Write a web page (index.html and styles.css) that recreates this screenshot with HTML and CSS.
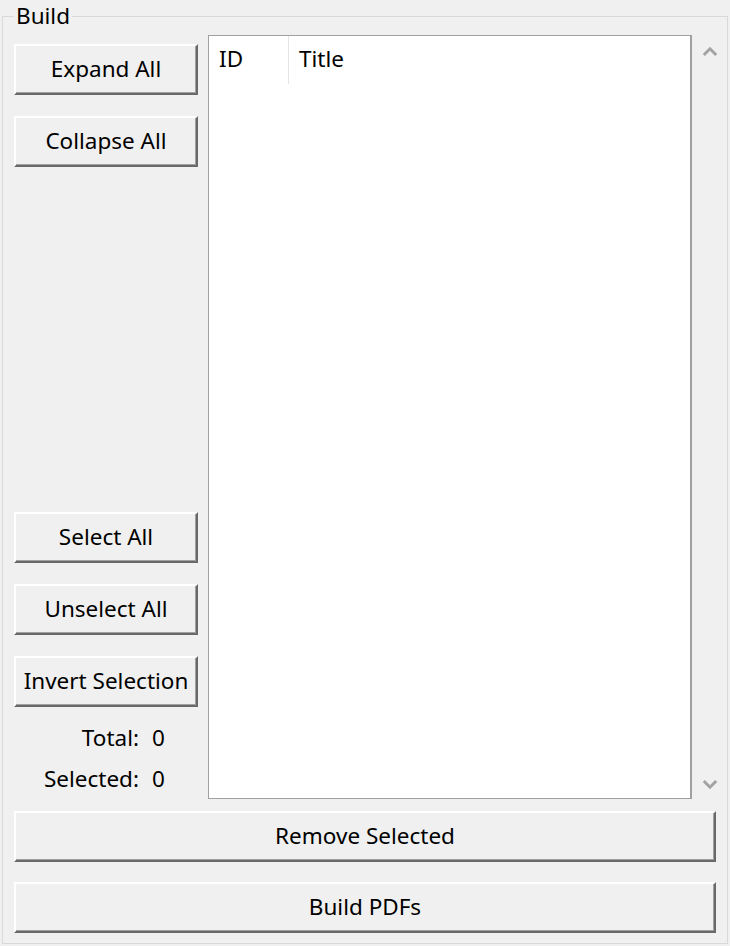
FILE: index.html
```html
<!DOCTYPE html>
<html lang="en">
<head>
<meta charset="utf-8">
<title>Build</title>
<link rel="stylesheet" href="styles.css">
</head>
<body>
<fieldset class="group">
  <legend class="group-title">Build</legend>
  <div class="layout">
    <div class="side">
      <div class="btn-stack">
        <button class="btn">Expand All</button>
        <button class="btn">Collapse All</button>
      </div>
      <div class="btn-stack">
        <button class="btn">Select All</button>
        <button class="btn">Unselect All</button>
        <button class="btn">Invert Selection</button>
        <div class="stats">
          <span class="stat-label">Total:</span><span class="stat-value">0</span>
          <span class="stat-label">Selected:</span><span class="stat-value">0</span>
        </div>
      </div>
    </div>
    <div class="list">
      <div class="list-header">
        <div class="col col-id">ID</div>
        <div class="col col-title">Title</div>
      </div>
    </div>
    <div class="scrollbar">
      <svg class="chev" width="16" height="11" viewBox="0 0 16 11"><path d="M1.8 9 L8 2.8 L14.2 9" fill="none" stroke="#a3a3a3" stroke-width="3"/></svg>
      <svg class="chev" width="16" height="11" viewBox="0 0 16 11"><path d="M1.8 2 L8 8.2 L14.2 2" fill="none" stroke="#a3a3a3" stroke-width="3"/></svg>
    </div>
  </div>
  <div class="actions">
    <button class="btn wide">Remove Selected</button>
    <button class="btn wide">Build PDFs</button>
  </div>
</fieldset>
</body>
</html>
```
FILE: styles.css
```css
html, body {
  margin: 0;
  padding: 0;
  background: #f0f0f0;
}
body {
  font-family: "Noto Sans", "Open Sans", sans-serif;
  font-size: 22.5px;
  color: #000;
}
.group {
  box-sizing: border-box;
  margin: 0 0 0 2px;
  width: 726px;
  height: 944px;
  padding: 0 0 0 11px;
  border: 1px solid #d9d9d9;
}
.group-title {
  padding: 0 2px;
  font-size: 22.5px;
  line-height: 32px;
}
.layout {
  display: flex;
  margin-top: 3px;
  height: 764px;
}
.side {
  width: 184px;
  margin-right: 10px;
  display: flex;
  flex-direction: column;
  justify-content: space-between;
  padding-top: 9px;
  box-sizing: border-box;
}
.btn-stack {
  display: flex;
  flex-direction: column;
  gap: 21px;
}
.btn {
  box-sizing: border-box;
  height: 51px;
  width: 100%;
  margin: 0;
  padding: 0 0 2px;
  font-family: inherit;
  font-size: 22.5px;
  color: #000;
  background: #f0f0f0;
  border: 2px solid;
  border-color: #ffffff #696969 #696969 #ffffff;
  box-shadow: inset -1px -1px 0 #a0a0a0;
  display: flex;
  align-items: center;
  justify-content: center;
  white-space: nowrap;
}
.stats {
  display: grid;
  grid-template-columns: 125px auto;
  column-gap: 13px;
  margin-top: -11px;
  line-height: 41px;
}
.stat-label {
  text-align: right;
}
.list {
  box-sizing: border-box;
  width: 484px;
  height: 764px;
  background: #fff;
  border: 1px solid #a0a0a0;
  border-right: 2px solid #a0a0a0;
}
.list-header {
  display: flex;
  height: 48px;
}
.col {
  display: flex;
  align-items: center;
  padding-left: 10px;
  padding-bottom: 2px;
  line-height: 1;
}
.col-id {
  width: 69px;
  border-right: 1px solid #e5e5e5;
}
.scrollbar {
  flex: 1;
  display: flex;
  flex-direction: column;
  justify-content: space-between;
  align-items: flex-start;
  padding: 11px 0 9px 10px;
}
.chev {
  display: block;
}
.actions {
  display: flex;
  flex-direction: column;
  gap: 20px;
  margin-top: 12px;
  width: 702px;
}
```
